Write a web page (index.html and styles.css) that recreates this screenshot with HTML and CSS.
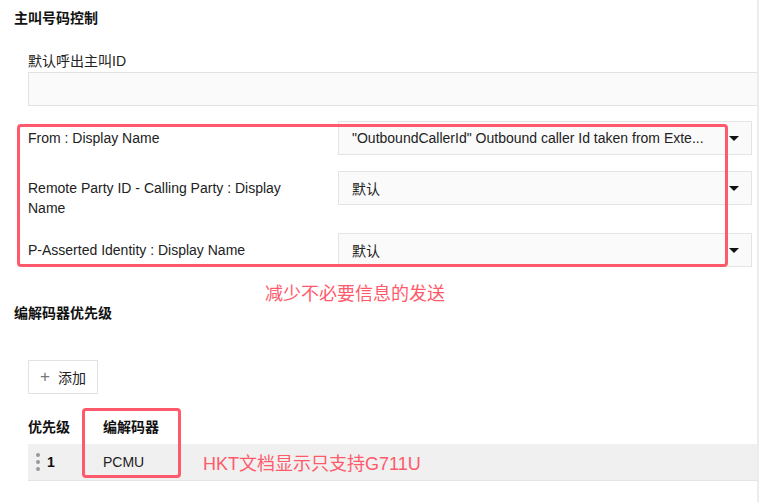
FILE: index.html
```html
<!DOCTYPE html>
<html lang="zh">
<head>
<meta charset="utf-8">
<link rel="stylesheet" href="styles.css">
</head>
<body>
<div class="page">
  <h2 class="section-title">主叫号码控制</h2>
  <div class="field">
    <div class="field-label">默认呼出主叫ID</div>
    <div class="input"></div>
  </div>

  <div class="rows">
    <div class="row">
      <div class="row-label">From : Display Name</div>
      <div class="select"><span class="select-text">"OutboundCallerId" Outbound caller Id taken from Exte...</span><span class="caret"></span></div>
    </div>
    <div class="row">
      <div class="row-label">Remote Party ID - Calling Party : Display Name</div>
      <div class="select"><span class="select-text">默认</span><span class="caret"></span></div>
    </div>
    <div class="row">
      <div class="row-label">P-Asserted Identity : Display Name</div>
      <div class="select"><span class="select-text">默认</span><span class="caret"></span></div>
    </div>
    <div class="mark mark-rows"></div>
  </div>

  <div class="note note-first">减少不必要信息的发送</div>

  <h2 class="section-title">编解码器优先级</h2>

  <div class="toolbar">
    <button class="add-btn"><span class="plus">+</span>添加</button>
  </div>

  <div class="table">
    <div class="thead">
      <div class="col-pri">优先级</div>
      <div class="col-codec">编解码器</div>
    </div>
    <div class="trow">
      <div class="col-pri"><span class="drag"><i></i><i></i><i></i></span><b>1</b></div>
      <div class="col-codec">PCMU</div>
    </div>
    <div class="mark mark-codec"></div>
    <div class="note note-codec">HKT文档显示只支持G711U</div>
  </div>
</div>
</body>
</html>
```

FILE: styles.css
```css
html, body {
  margin: 0;
  padding: 0;
  background: #fff;
}
body {
  font-family: "Liberation Sans", Arial, "Noto Sans CJK SC", sans-serif;
  font-size: 14px;
  color: #222;
}
.page {
  width: 759px;
  height: 502px;
  border-right: 2px solid #ececec;
  padding: 8px 0 0 14px;
  box-sizing: border-box;
  overflow: hidden;
}
.section-title {
  margin: 0;
  font-size: 14px;
  font-weight: bold;
  line-height: 20px;
  color: #111;
}
.field {
  margin: 23px 0 0 14px;
}
.field-label {
  line-height: 20px;
}
.input {
  margin-top: 1px;
  height: 34px;
  box-sizing: border-box;
  width: 740px;
  background: #fafafa;
  border: 1px solid #e2e2e2;
}
.rows {
  position: relative;
  margin: 15px 0 0 14px;
  width: 724px;
  display: flex;
  flex-direction: column;
  gap: 16px;
}
.row {
  display: grid;
  grid-template-columns: 310px 414px;
  align-items: start;
}
.row-label {
  padding: 7px 30px 0 0;
  margin-bottom: -1px;
  line-height: 20px;
}
.select {
  height: 34px;
  box-sizing: border-box;
  background: #fafafa;
  border: 1px solid #e4e4e4;
  display: flex;
  align-items: center;
  padding: 0 12px 0 13px;
}
.select-text {
  flex: 1;
  white-space: nowrap;
  overflow: hidden;
}
.caret {
  width: 0;
  height: 0;
  border-left: 5px solid transparent;
  border-right: 5px solid transparent;
  border-top: 5px solid #111;
  margin-left: 14px;
}
.mark {
  position: absolute;
  border: 3px solid #ff5a6b;
  border-radius: 4px;
  box-sizing: border-box;
  pointer-events: none;
}
.mark-rows {
  left: -11px;
  top: 3px;
  width: 711px;
  height: 143px;
}
.note {
  color: #ff5a6b;
  font-size: 18px;
  line-height: 18px;
}
.note-first {
  margin: 18px 0 0 251px;
}
.toolbar {
  margin: 37px 0 0 14px;
}
.add-btn {
  height: 34px;
  width: 70px;
  box-sizing: border-box;
  border: 1px solid #e2e2e2;
  background: #fff;
  font-family: inherit;
  font-size: 14px;
  color: #222;
  padding: 0;
  display: flex;
  align-items: center;
  justify-content: center;
}
.plus {
  color: #777;
  font-size: 17px;
  margin-right: 8px;
  font-weight: 300;
}
.table {
  position: relative;
  margin: 14px 0 0 14px;
  width: 740px;
}
.thead {
  display: flex;
  height: 36px;
  align-items: center;
  font-weight: bold;
  color: #111;
}
.trow {
  display: flex;
  height: 37px;
  align-items: center;
  background: #f0f0f0;
  border-bottom: 1px solid #e4e4e4;
  box-sizing: border-box;
}
.col-pri {
  width: 75px;
  display: flex;
  align-items: center;
}
.col-codec {
  flex: 1;
}
.drag {
  display: flex;
  flex-direction: column;
  gap: 3px;
  margin: 0 7px 0 8px;
}
.drag i {
  width: 4px;
  height: 4px;
  border-radius: 50%;
  background: #999;
}
.trow b {
  color: #111;
}
.mark-codec {
  left: 54px;
  top: 0;
  width: 99px;
  height: 70px;
}
.note-codec {
  position: absolute;
  left: 175px;
  top: 47px;
  white-space: nowrap;
}
```
